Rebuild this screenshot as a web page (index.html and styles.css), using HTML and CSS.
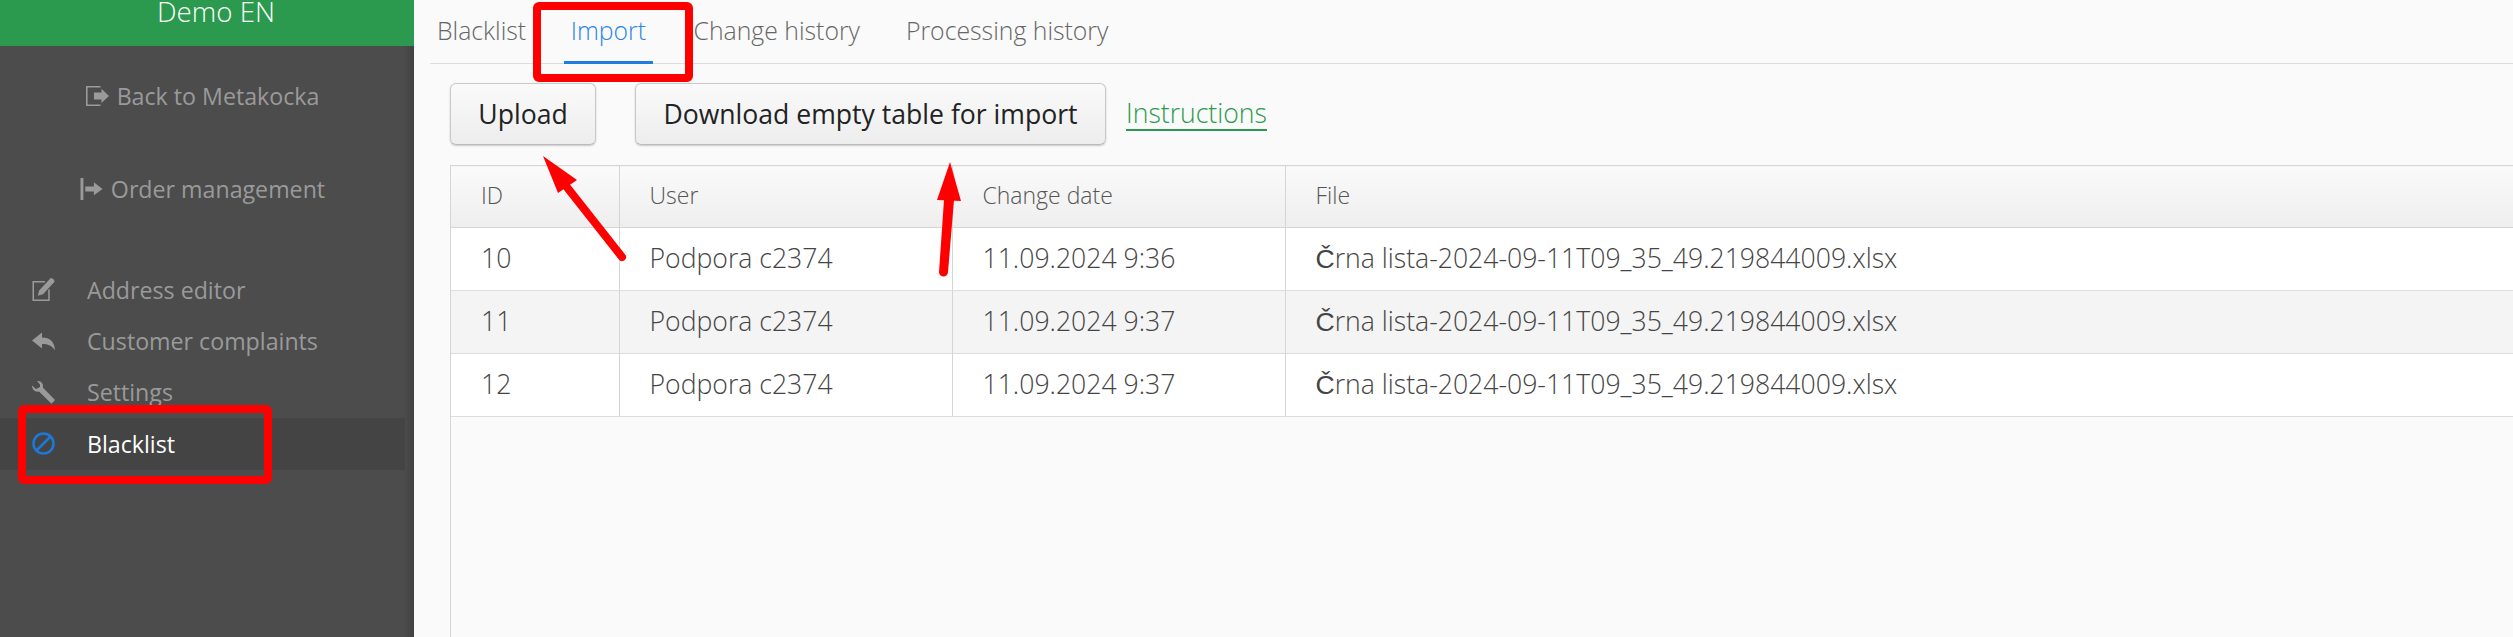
FILE: index.html
```html
<!DOCTYPE html>
<html lang="en">
<head>
<meta charset="utf-8">
<title>Blacklist import</title>
<link rel="stylesheet" href="styles.css">
</head>
<body>
<div class="app">
  <aside class="sidebar">
    <div class="brand">Demo EN</div>
    <a class="nav-link">
      <svg class="link-icon" viewBox="0 0 23 20"><path class="line" d="M14.5 .8H.8V19.2H14.5"/><path class="solid" d="M8 6.5H15.5V2.8L23 10L15.5 17V13.5H8Z"/></svg>
      <span>Back to Metakocka</span>
    </a>
    <a class="nav-link">
      <svg class="link-icon" viewBox="0 0 23 23"><path class="solid" d="M0 0H3V23H0Z"/><path class="solid" d="M5 9H14V4.500L23 11.500L14 18V14H5Z"/></svg>
      <span>Order management</span>
    </a>
    <ul class="menu">
      <li class="menu-item">
        <svg class="menu-icon" viewBox="0 0 23 24"><path class="line" d="M13 3.800H.8V23.200H17.200V12"/><path class="solid" d="M19 0C21.500 .2 23 2 23 4L11 17L5.500 18.500L7 13Z"/></svg>
        <span>Address editor</span>
      </li>
      <li class="menu-item">
        <svg class="menu-icon" viewBox="0 0 23 18"><path class="solid" d="M0 8L10 0V5C18 5 22.500 9 23 18C20 13 16 11.500 10 11.500V16Z"/></svg>
        <span>Customer complaints</span>
      </li>
      <li class="menu-item">
        <svg class="menu-icon" viewBox="0 0 23 23"><path class="solid" d="M5 0C9 -.5 12 3 10.800 6.500L23 19L19.500 22.800L7 10.500C3.500 11.500 0 8.500 0 4.500L4 8L8 6L8 3.500Z"/></svg>
        <span>Settings</span>
      </li>
      <li class="menu-item is-active">
        <svg class="menu-icon" viewBox="0 0 23 23"><circle class="ban" cx="11.500" cy="11.500" r="10"/><path class="ban" d="M4.500 18.500L18.500 4.500"/></svg>
        <span>Blacklist</span>
      </li>
    </ul>
  </aside>
  <main class="content">
    <nav class="tabs">
      <a class="tab">Blacklist</a>
      <a class="tab is-active">Import</a>
      <a class="tab">Change history</a>
      <a class="tab">Processing history</a>
    </nav>
    <div class="toolbar">
      <button class="btn" type="button">Upload</button>
      <button class="btn btn-wide" type="button">Download empty table for import</button>
      <a class="instructions">Instructions</a>
    </div>
    <div class="table-wrap">
      <table class="grid">
        <colgroup>
          <col class="col-id"><col class="col-user"><col class="col-date"><col>
        </colgroup>
        <thead>
          <tr><th>ID</th><th>User</th><th>Change date</th><th>File</th></tr>
        </thead>
        <tbody>
          <tr><td>10</td><td>Podpora c2374</td><td>11.09.2024 9:36</td><td><span class="fallback">Č</span>rna lista-2024-09-11T09_35_49.219844009.xlsx</td></tr>
          <tr><td>11</td><td>Podpora c2374</td><td>11.09.2024 9:37</td><td><span class="fallback">Č</span>rna lista-2024-09-11T09_35_49.219844009.xlsx</td></tr>
          <tr><td>12</td><td>Podpora c2374</td><td>11.09.2024 9:37</td><td><span class="fallback">Č</span>rna lista-2024-09-11T09_35_49.219844009.xlsx</td></tr>
        </tbody>
      </table>
    </div>
  </main>
</div>
<svg class="annotations" viewBox="0 0 2513 637">
  <rect class="mark" x="22" y="409" width="246" height="71" rx="2"/>
  <rect class="mark" x="537" y="6" width="152" height="72" rx="2"/>
  <path class="arrow-fill" d="M543 156L577 180L558 193Z"/>
  <path class="arrow-line" d="M566 186L622 257"/>
  <path class="arrow-fill" d="M950 162L961 201L937 200Z"/>
  <path class="arrow-fill" d="M944 200L954 200L948 272A4 4 0 0 1 939 272Z"/>
</svg>
</body>
</html>
```

FILE: styles.css
```css
* { box-sizing: border-box; }
html, body { margin: 0; height: 100%; overflow: hidden; }
body { font-family: "Open Sans", sans-serif; background: #fafafa; }

.app { display: flex; height: 100vh; }

.sidebar {
  flex: 0 0 414px;
  background: linear-gradient(to right, #4c4c4c 404px, #414141 414px);
  color: #9a9a9a;
}
.brand {
  height: 46px;
  background: #2b9a4e;
  color: #fff;
  font-size: 27.700px;
  font-weight: 300;
  line-height: 22px;
  padding-left: 18px;
  text-align: center;
  overflow: hidden;
}
.nav-link {
  display: flex;
  align-items: center;
  justify-content: center;
  gap: 8px;
  height: 93px;
  padding-right: 9px;
  font-size: 23.200px;
}
.nav-link:first-of-type { margin-top: 3px; }
.link-icon { width: 23px; height: 22px; flex: none; }
.line { fill: none; stroke: #9a9a9a; stroke-width: 1.600; }
.solid { fill: #9a9a9a; }
.ban { fill: none; stroke: #1e78d6; stroke-width: 2.600; }

.menu { list-style: none; margin: 29px 9px 0 0; padding: 0; }
.menu-item {
  display: flex;
  align-items: center;
  gap: 32px;
  height: 51.400px;
  padding-left: 32px;
  font-size: 23.200px;
}
.menu-icon { width: 23px; height: 23px; flex: none; }
.menu-item.is-active { background: #444; color: #fff; }

.content {
  flex: 1;
  min-width: 0;
  display: flex;
  flex-direction: column;
  padding-left: 16px;
}
.tabs {
  display: flex;
  gap: 32px;
  height: 64px;
  border-bottom: 1px solid #ddd;
  flex: none;
}
.tab {
  height: 64px;
  padding: 12px 7px 0;
  font-size: 24.800px;
  font-weight: 300;
  line-height: 36px;
  color: #666;
}
.tab.is-active {
  margin: 0 1.500px 0 -1.500px;
  color: #2a84e6;
  border-bottom: 3px solid #1e7fe0;
}

.toolbar {
  display: flex;
  align-items: center;
  margin: 19px 0 20px 20px;
  flex: none;
}
.btn {
  height: 62px;
  width: 146px;
  padding: 0;
  border: 1px solid #c9c9c9;
  border-bottom-color: #bbb;
  border-radius: 6px;
  background: linear-gradient(#fafafa, #ededed);
  box-shadow: 0 1px 2px rgba(0, 0, 0, .2);
  font-family: inherit;
  font-size: 26.600px;
  color: #222;
}
.btn-wide { width: 471px; margin-left: 39px; }
.instructions {
  margin-left: 20px;
  padding-bottom: 0;
  border-bottom: 2px solid #2b9a4e;
  font-size: 26.600px;
  font-weight: 300;
  line-height: 32px;
  color: #2b9a4e;
}

.table-wrap {
  flex: 1;
  margin-left: 20px;
  border-left: 1px solid #d5d5d5;
}
.grid {
  width: 100%;
  table-layout: fixed;
  border-collapse: collapse;
}
.col-id { width: 168px; }
.col-user { width: 333px; }
.col-date { width: 333px; }
.grid th, .grid td {
  padding: 0 0 3px 30px;
  text-align: left;
  font-weight: 300;
  white-space: nowrap;
  border-bottom: 1px solid #ddd;
  border-left: 1px solid #d5d5d5;
}
.grid th:first-child, .grid td:first-child { border-left: 0; }
.grid th {
  height: 62px;
  font-size: 23px;
  color: #555;
  background: linear-gradient(#fafafa, #eee);
  border-top: 1px solid #d5d5d5;
  border-bottom-color: #d5d5d5;
}
.grid td {
  height: 63px;
  font-size: 26.600px;
  color: #444;
  background: #fff;
}
.grid tbody tr:nth-child(even) td { background: #f4f4f4; }
.fallback { font-family: "Liberation Sans", sans-serif; font-weight: 400; }

.annotations {
  position: absolute;
  inset: 0;
  width: 2513px;
  height: 637px;
  pointer-events: none;
}
.mark { fill: none; stroke: #f00; stroke-width: 8; }
.arrow-fill { fill: #f00; }
.arrow-line { fill: none; stroke: #f00; stroke-width: 8; stroke-linecap: round; }
```
